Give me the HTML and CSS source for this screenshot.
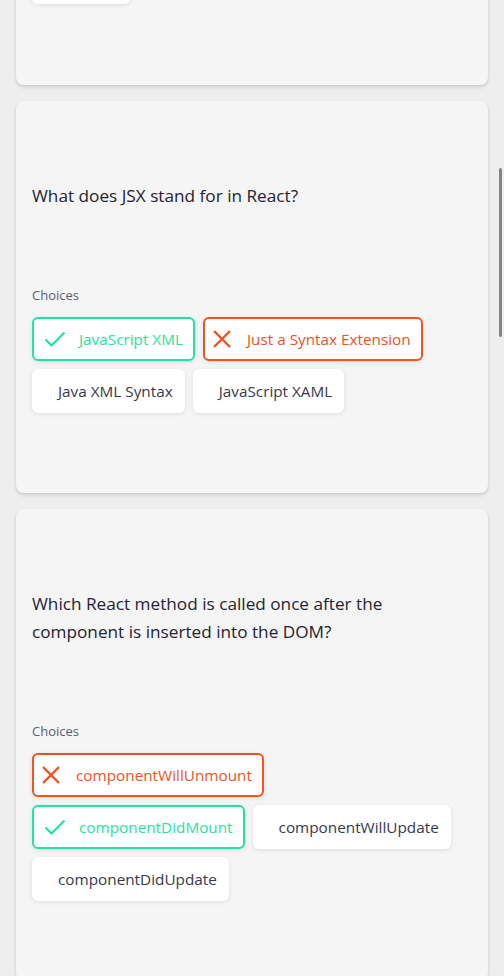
FILE: index.html
```html
<!DOCTYPE html>
<html lang="en">
<head>
<meta charset="utf-8">
<title>Quiz review</title>
<link rel="stylesheet" href="styles.css">
</head>
<body>
<main class="list">
  <section class="card card--partial">
    <div class="choices">
      <div class="chip chip--plain chip--stub"></div>
    </div>
  </section>

  <section class="card">
    <p class="question">What does JSX stand for in React?</p>
    <p class="label">Choices</p>
    <div class="choices">
      <div class="chip chip--correct">
        <svg class="icon" viewBox="0 0 24 24" width="24" height="24"><path d="M2.5 12.5l6 6L21.5 5.5" fill="none" stroke="currentColor" stroke-width="2.2"/></svg>
        <span>JavaScript XML</span>
      </div>
      <div class="chip chip--wrong">
        <svg class="icon icon--x" viewBox="0 0 18 18" width="18" height="18"><path d="M1 1l16 16M17 1L1 17" fill="none" stroke="currentColor" stroke-width="2.4"/></svg>
        <span>Just a Syntax Extension</span>
      </div>
      <div class="chip chip--plain">Java XML Syntax</div>
      <div class="chip chip--plain">JavaScript XAML</div>
    </div>
  </section>

  <section class="card">
    <p class="question">Which React method is called once after the component is inserted into the DOM?</p>
    <p class="label">Choices</p>
    <div class="choices">
      <div class="chip chip--wrong">
        <svg class="icon icon--x" viewBox="0 0 18 18" width="18" height="18"><path d="M1 1l16 16M17 1L1 17" fill="none" stroke="currentColor" stroke-width="2.4"/></svg>
        <span>componentWillUnmount</span>
      </div>
      <div class="chip chip--correct">
        <svg class="icon" viewBox="0 0 24 24" width="24" height="24"><path d="M2.5 12.5l6 6L21.5 5.5" fill="none" stroke="currentColor" stroke-width="2.2"/></svg>
        <span>componentDidMount</span>
      </div>
      <div class="chip chip--plain">componentWillUpdate</div>
      <div class="chip chip--plain">componentDidUpdate</div>
    </div>
  </section>
</main>
<div class="scroll-thumb"></div>
</body>
</html>
```

FILE: styles.css
```css
* { box-sizing: border-box; }
html, body { margin: 0; padding: 0; }
body {
  background: #eeeeee;
  font-family: "Open Sans", "Noto Sans", sans-serif;
  color: #1f2333;
  overflow: hidden;
}
.list {
  display: flex;
  flex-direction: column;
  gap: 16px;
  padding: 0 16px;
}
.card {
  background: #f5f5f5;
  border-radius: 8px;
  box-shadow: 0 2px 4px rgba(0,0,0,0.12), 0 1px 2px rgba(0,0,0,0.06);
  padding: 81px 16px 80px;
}
.card--partial {
  margin-top: -40px;
  padding-top: 0;
  padding-bottom: 81px;
  border-radius: 0 0 8px 8px;
}
.chip--stub { width: 98px; }
.question {
  margin: 0;
  font-size: 17.2px;
  line-height: 28px;
  color: #1f2333;
}
.label {
  margin: 75px 0 12px;
  font-size: 13px;
  line-height: 20px;
  color: #5b6070;
}
.choices {
  display: flex;
  flex-wrap: wrap;
  gap: 8px;
}
.chip {
  height: 44px;
  display: flex;
  align-items: center;
  background: #ffffff;
  border-radius: 6px;
  border: 2px solid transparent;
  box-shadow: 0 1px 4px rgba(0,0,0,0.10);
  font-size: 15.3px;
  color: #353a4c;
  padding: 0 10px 0 24px;
  white-space: nowrap;
}
.chip--correct {
  border-color: #1ee6a0;
  color: #1ee6a0;
  padding-left: 9px;
}
.chip--wrong {
  border-color: #f4511e;
  color: #f4511e;
  padding-left: 8px;
}
.icon { flex: none; margin-right: 12px; }
.icon--x { margin-left: 0; margin-right: 16px; }
.scroll-thumb {
  position: fixed;
  right: 2px;
  top: 168px;
  width: 3px;
  height: 169px;
  border-radius: 2px;
  background: #7f8484;
}
```
